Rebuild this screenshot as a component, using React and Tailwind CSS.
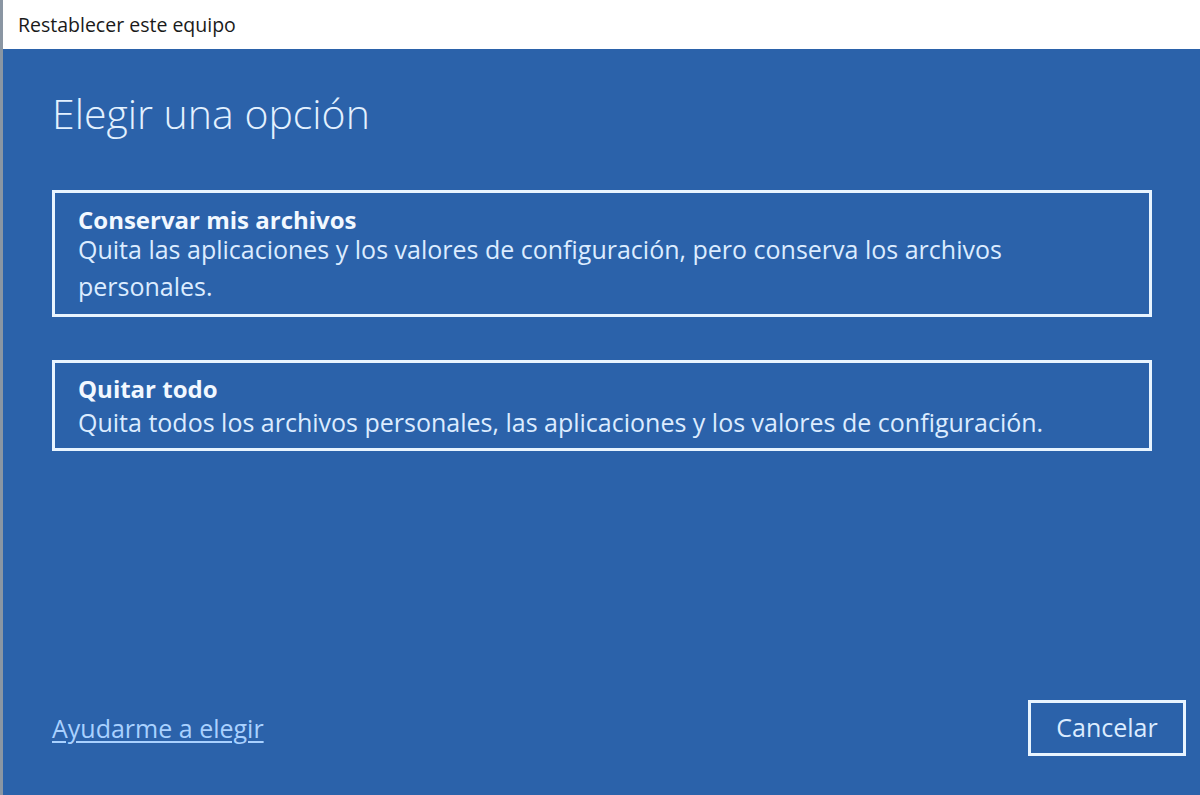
export default function App() {
  return (
    <div
      className="flex h-[795px] w-full flex-col overflow-hidden border-l-[3px] border-[#8a96a3]"
      style={{ fontFamily: '"Open Sans", "Noto Sans", sans-serif' }}
    >
      {/* window title bar */}
      <div className="flex h-[49px] shrink-0 items-center bg-white pl-[15px]">
        <span className="text-[19.5px] text-[#1a1a1a]">Restablecer este equipo</span>
      </div>

      {/* dialog body */}
      <div className="flex flex-1 flex-col bg-[#2b62aa] pl-[49px] pr-[14px] pb-[39px]">
        <h1 className="mt-[40px] text-[41px] font-light leading-[48px] text-[#e3f1ff]">
          Elegir una opción
        </h1>

        <div className="mt-[53px] flex w-[1100px] flex-col gap-[43px]">
          <button className="flex flex-col items-start border-[3px] border-[#e8f4ff] px-[23px] pt-[16px] pb-[9px] text-left">
            <span className="text-[24px] font-bold leading-[22px] text-[#f2f8ff]">
              Conservar mis archivos
            </span>
            <span className="text-[25px] leading-[37px] text-[#dcecff]">
              Quita las aplicaciones y los valores de configuración, pero conserva los archivos
              <br />
              personales.
            </span>
          </button>

          <button className="flex flex-col items-start border-[3px] border-[#e8f4ff] px-[23px] pt-[15px] pb-[9px] text-left">
            <span className="text-[24px] font-bold leading-[22px] text-[#f2f8ff]">
              Quitar todo
            </span>
            <span className="mt-[5px] text-[25px] leading-[34px] text-[#dcecff]">
              Quita todos los archivos personales, las aplicaciones y los valores de configuración.
            </span>
          </button>
        </div>

        <div className="mt-auto flex items-center justify-between">
          <a className="text-[25px] leading-[34px] text-[#a9d1ff] underline underline-offset-[3px] decoration-[2px]">
            Ayudarme a elegir
          </a>
          <button className="flex h-[56px] w-[158px] items-center justify-center border-[3px] border-[#e8f4ff] text-[25px] text-[#dcecff]">
            Cancelar
          </button>
        </div>
      </div>
    </div>
  );
}
